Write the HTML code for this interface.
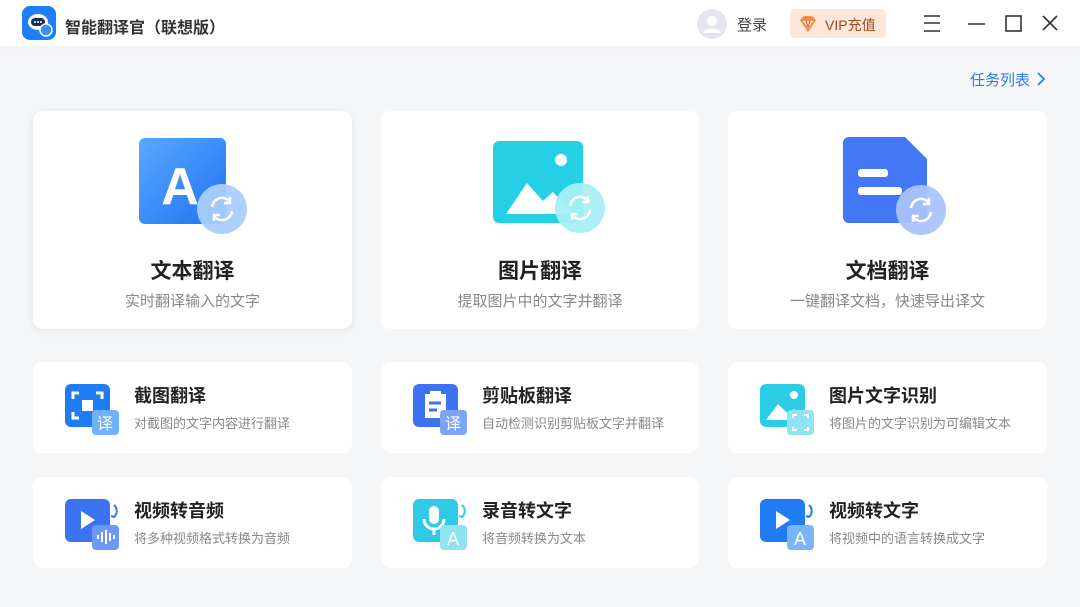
<!DOCTYPE html><html><head><meta charset="utf-8"><style>
*{margin:0;padding:0;box-sizing:border-box}
body{width:1080px;height:607px;background:#f5f6f8;font-family:"Liberation Sans","Noto Sans CJK SC",sans-serif;position:relative;overflow:hidden}
.hd{position:absolute;left:0;top:0;width:1080px;height:46px;background:#fff;box-shadow:0 1px 3px rgba(0,0,0,.04)}
.abs{position:absolute}
.card{position:absolute;background:#fff;border-radius:10px}
.big .t{position:absolute;left:0;right:0;top:144px;text-align:center;font-size:21px;font-weight:bold;color:#222}
.big .s{position:absolute;left:0;right:0;top:179px;text-align:center;font-size:15px;color:#888}
.sm .t{position:absolute;left:101px;top:20px;font-size:18px;font-weight:bold;color:#222}
.sm .s{position:absolute;left:101px;top:51px;font-size:13px;color:#888}
.sm svg{position:absolute;left:30px;top:20px}
</style></head><body>
<div class="hd">
<svg class="abs" style="left:22px;top:6px" width="34" height="34"><rect width="34" height="34" rx="8" fill="#1e7ef5"/><ellipse cx="16" cy="16" rx="10" ry="8" fill="#fff"/><rect x="9" y="12" width="14" height="8" rx="4" fill="#1a2b55"/><circle cx="13" cy="16" r="1" fill="#fff"/><circle cx="16" cy="16" r="1" fill="#fff"/><circle cx="19" cy="16" r="1" fill="#fff"/><circle cx="24" cy="24" r="6" fill="#3a8ff8" stroke="#fff" stroke-width="1.5"/></svg>
<div class="abs" style="left:65px;top:14px;font-size:16px;font-weight:bold;color:#333">智能翻译官（联想版）</div>
<svg class="abs" style="left:696px;top:8px" width="32" height="32"><circle cx="16" cy="16" r="15" fill="#e3e6ee"/><circle cx="16" cy="13" r="5" fill="#fff"/><path d="M7 25c2-6 16-6 18 0" fill="#fff"/></svg>
<div class="abs" style="left:737px;top:14px;font-size:15px;color:#444">登录</div>
<div class="abs" style="left:790px;top:9px;width:96px;height:29px;border-radius:5px;background:#fde6da"></div>
<svg class="abs" style="left:797px;top:13px" width="22" height="22"><path d="M3 7l4-4h8l4 4-8 12z" fill="#f08c4a"/><path d="M6 8l5 7 5-7z" fill="#fff3ea"/><text x="11" y="14" font-size="8" text-anchor="middle" fill="#c0551a" font-weight="bold" font-family="Liberation Sans">V</text></svg>
<div class="abs" style="left:825px;top:15px;font-size:14px;color:#a04a1a">VIP充值</div>
<svg class="abs" style="left:922px;top:14px" width="140" height="20" fill="none" stroke="#333" stroke-width="1.6"><path d="M2 2h16M2 9h16M2 17h16"/><path d="M46 10h17"/><rect x="84" y="2" width="15" height="15"/><path d="M121 2l14 14M135 2l-14 14"/></svg>
</div>
<div class="abs" style="left:970px;top:69px;font-size:15px;color:#2f7cf0">任务列表</div>
<svg class="abs" style="left:1036px;top:72px" width="10" height="14"><path d="M2 1l6 6-6 6" stroke="#2f7cf0" stroke-width="1.8" fill="none"/></svg>

<div class="card big" style="left:33px;top:111px;width:319px;height:218px;box-shadow:0 2px 8px rgba(0,0,0,.08)">
<svg class="abs" style="left:105px;top:25px" width="112" height="100"><defs><linearGradient id="g1" x1="0" y1="0" x2="1" y2="1"><stop offset="0" stop-color="#5aa8ff"/><stop offset="1" stop-color="#1e73f0"/></linearGradient></defs><rect x="1" y="2" width="87" height="86" rx="6" fill="url(#g1)"/><text x="42" y="68" font-size="52" fill="#fff" text-anchor="middle" font-weight="bold" font-family="Liberation Sans">A</text><circle cx="84" cy="73" r="25" fill="#a9cdfc" opacity=".95"/><path d="M74 71a10 10 0 0 1 18-5M94 75a10 10 0 0 1-18 5" stroke="#fff" stroke-width="2.5" fill="none"/><path d="M92 61v6h-6M76 85v-6h6" stroke="#fff" stroke-width="2.5" fill="none"/></svg>
<div class="t">文本翻译</div><div class="s">实时翻译输入的文字</div></div>

<div class="card big" style="left:381px;top:111px;width:318px;height:218px">
<svg class="abs" style="left:111px;top:28px" width="116" height="100"><rect x="1" y="2" width="90" height="82" rx="6" fill="#25d0e6"/><circle cx="69" cy="21" r="6" fill="#fff"/><path d="M14 75l21-31 16 18 10-9 20 22z" fill="#fff"/><circle cx="88" cy="69" r="25" fill="#a8eef5" opacity=".95"/><path d="M78 67a10 10 0 0 1 18-5M98 71a10 10 0 0 1-18 5" stroke="#fff" stroke-width="2.5" fill="none"/><path d="M96 57v6h-6M80 81v-6h6" stroke="#fff" stroke-width="2.5" fill="none"/></svg>
<div class="t">图片翻译</div><div class="s">提取图片中的文字并翻译</div></div>

<div class="card big" style="left:728px;top:111px;width:319px;height:218px">
<svg class="abs" style="left:113px;top:24px" width="110" height="104"><path d="M8 2h56l22 22v58a6 6 0 0 1-6 6H8a6 6 0 0 1-6-6V8a6 6 0 0 1 6-6z" fill="#4377f5"/><rect x="17" y="34" width="30" height="8" rx="3" fill="#fff"/><rect x="17" y="52" width="44" height="8" rx="3" fill="#fff"/><circle cx="80" cy="75" r="25" fill="#a9c3fb" opacity=".95"/><path d="M70 73a10 10 0 0 1 18-5M90 77a10 10 0 0 1-18 5" stroke="#fff" stroke-width="2.5" fill="none"/><path d="M88 63v6h-6M72 87v-6h6" stroke="#fff" stroke-width="2.5" fill="none"/></svg>
<div class="t">文档翻译</div><div class="s">一键翻译文档，快速导出译文</div></div>

<div class="card sm" style="left:33px;top:362px;width:319px;height:91px">
<svg width="60" height="56"><rect x="2" y="2" width="45" height="43" rx="6" fill="#1f7cf2"/><path d="M10 17v-6h6M33 11h6v6M39 30v6h-6M16 36h-6v-6" stroke="#fff" stroke-width="3" fill="none"/><rect x="19" y="18" width="11" height="11" fill="#fff"/><rect x="29" y="28" width="27" height="25" rx="4" fill="#6fb1fb"/><text x="42" y="47" font-size="16" fill="#fff" text-anchor="middle" font-family="Noto Sans CJK SC">译</text></svg>
<div class="t">截图翻译</div><div class="s">对截图的文字内容进行翻译</div></div>

<div class="card sm" style="left:381px;top:362px;width:318px;height:91px">
<svg width="60" height="56"><rect x="2" y="2" width="45" height="43" rx="6" fill="#3d73f0"/><path d="M14 12h21v24H14z" fill="#fff"/><rect x="19" y="9" width="11" height="5" fill="#fff"/><path d="M18 21h12M18 28h8" stroke="#3d73f0" stroke-width="3"/><rect x="29" y="28" width="27" height="25" rx="4" fill="#7ea3f8"/><text x="42" y="47" font-size="16" fill="#fff" text-anchor="middle" font-family="Noto Sans CJK SC">译</text></svg>
<div class="t">剪贴板翻译</div><div class="s">自动检测识别剪贴板文字并翻译</div></div>

<div class="card sm" style="left:728px;top:362px;width:319px;height:91px">
<svg width="60" height="56"><rect x="2" y="2" width="45" height="43" rx="6" fill="#2ccce6"/><circle cx="36" cy="13" r="4" fill="#fff"/><path d="M8 38l12-16 10 10 6-5 10 11z" fill="#fff"/><rect x="29" y="28" width="27" height="25" rx="4" fill="#8fe3f2"/><path d="M35 36v-3h4M46 33h4v3M50 45v3h-4M39 48h-4v-3" stroke="#fff" stroke-width="2" fill="none"/></svg>
<div class="t">图片文字识别</div><div class="s">将图片的文字识别为可编辑文本</div></div>

<div class="card sm" style="left:33px;top:477px;width:319px;height:91px">
<svg width="60" height="56"><rect x="2" y="2" width="45" height="43" rx="6" fill="#3b74f2"/><path d="M18 14l14 9-14 9z" fill="#fff"/><path d="M51 8a8 8 0 0 1 0 12l-3-1" stroke="#3b74f2" stroke-width="2" fill="none"/><rect x="29" y="28" width="27" height="25" rx="4" fill="#6e98f7"/><path d="M35 38v4M39 35v10M43 33v14M47 36v8M51 38v4" stroke="#fff" stroke-width="2"/></svg>
<div class="t">视频转音频</div><div class="s">将多种视频格式转换为音频</div></div>

<div class="card sm" style="left:381px;top:477px;width:318px;height:91px">
<svg width="60" height="56"><rect x="2" y="2" width="45" height="43" rx="6" fill="#2fcbe6"/><rect x="18" y="9" width="10" height="18" rx="5" fill="#fff"/><path d="M13 22a10 10 0 0 0 20 0M23 32v6" stroke="#fff" stroke-width="3" fill="none"/><path d="M51 8a8 8 0 0 1 0 12l-3-1" stroke="#2fcbe6" stroke-width="2" fill="none"/><rect x="29" y="28" width="27" height="25" rx="4" fill="#8fe3f2"/><text x="42" y="48" font-size="18" fill="#fff" text-anchor="middle" font-family="Liberation Sans">A</text></svg>
<div class="t">录音转文字</div><div class="s">将音频转换为文本</div></div>

<div class="card sm" style="left:728px;top:477px;width:319px;height:91px">
<svg width="60" height="56"><rect x="2" y="2" width="45" height="43" rx="6" fill="#1f7cf2"/><path d="M18 14l14 9-14 9z" fill="#fff"/><path d="M51 8a8 8 0 0 1 0 12l-3-1" stroke="#1f7cf2" stroke-width="2" fill="none"/><rect x="29" y="28" width="27" height="25" rx="4" fill="#7ab4fb"/><text x="42" y="48" font-size="18" fill="#fff" text-anchor="middle" font-family="Liberation Sans">A</text></svg>
<div class="t">视频转文字</div><div class="s">将视频中的语言转换成文字</div></div>
</body></html>
